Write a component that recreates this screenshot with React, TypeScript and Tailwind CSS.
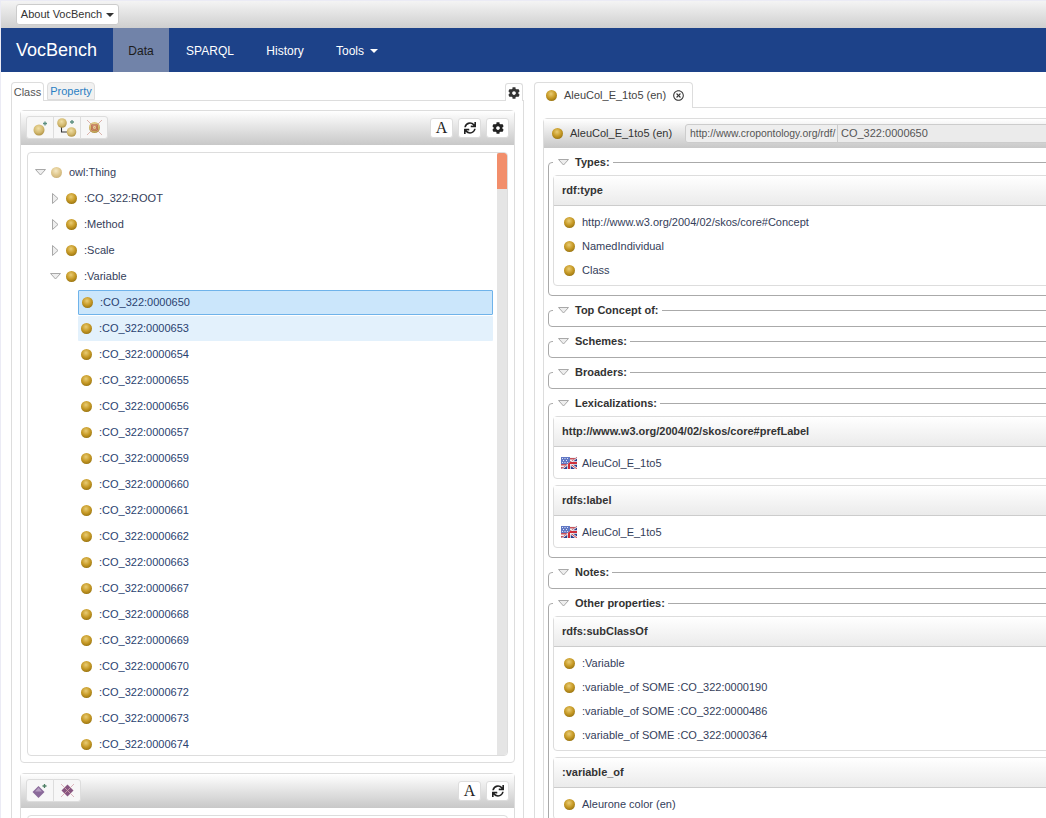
import { ReactNode } from "react";
import { FaCog, FaSync, FaRegTimesCircle } from "react-icons/fa";

// ========================================================================================================
//  Data
// ========================================================================================================
const variables = [
  "0000654", "0000655", "0000656", "0000657", "0000659", "0000660", "0000661", "0000662",
  "0000663", "0000667", "0000668", "0000669", "0000670", "0000672", "0000673", "0000674",
];

// =====================================================
//  Icons
// =====================================================
function Ball({ pale = false, size = 11 }: { pale?: boolean; size?: number }) {
  const id = pale ? "ball-pale" : "ball-full";
  return (
    <svg width={size} height={size} viewBox="0 0 12 12" className="shrink-0">
      <defs>
        <radialGradient id={id} cx="0.45" cy="0.35" r="0.7">
          <stop offset="0" stopColor={pale ? "#f5e8c4" : "#e9cc74"} />
          <stop offset="0.55" stopColor={pale ? "#e0c88e" : "#c79a26"} />
          <stop offset="1" stopColor={pale ? "#c8ae76" : "#94700f"} />
        </radialGradient>
      </defs>
      <circle cx="6" cy="6" r="6" fill={`url(#${id})`} />
    </svg>
  );
}

function Arrow({ open }: { open: boolean }) {
  return (
    <svg width="11" height="11" viewBox="0 0 11 11" className="shrink-0">
      {open ? (
        <path d="M0.5 2.5h10L5.5 8z" fill="#eeeeee" stroke="#a8a8a8" />
      ) : (
        <path d="M2.5 0.5v10L8 5.500z" fill="#eeeeee" stroke="#a8a8a8" />
      )}
    </svg>
  );
}

function Flag({ id }: { id: string }) {
  return (
    <svg width="16" height="12" viewBox="0 0 16 12" className="shrink-0">
      <defs>
        <clipPath id={id}>
          <path d="M16 0v12H0z" />
        </clipPath>
      </defs>
      {/* US half */}
      <rect width="16" height="12" fill="#f2f2f2" />
      <path d="M0 1h16v1.500H0zM0 4h16v1.500H0zM0 7h16v1.500H0zM0 10h16v1.500H0z" fill="#c9525a" />
      <rect width="9" height="7" fill="#6178c4" />
      <path d="M1 1h1v1H1zM3.500 1h1v1h-1zM6 1h1v1H6zM2 3h1v1H2zM5 3h1v1H5zM1 5h1v1H1zM3.500 5h1v1h-1zM6 5h1v1H6z" fill="#dfe4f5" />
      {/* UK half */}
      <g clipPath={`url(#${id})`}>
        <rect width="16" height="12" fill="#2b3f8c" />
        <path d="M0 0l16 12M16 0L0 12" stroke="#f2f2f2" strokeWidth="2.400" />
        <path d="M0 0l16 12M16 0L0 12" stroke="#cf2f3a" strokeWidth="0.900" />
        <path d="M8 0v12M0 6h16" stroke="#f2f2f2" strokeWidth="3.600" />
        <path d="M8 0v12M0 6h16" stroke="#cf2f3a" strokeWidth="2" />
      </g>
    </svg>
  );
}

function AddClassIcon() {
  return (
    <svg width="20" height="20" viewBox="0 0 20 20">
      <defs>
        <radialGradient id="tool-ball" cx="0.45" cy="0.35" r="0.7">
          <stop offset="0" stopColor="#f0dfa6" />
          <stop offset="0.6" stopColor="#d2b86e" />
          <stop offset="1" stopColor="#a88a3c" />
        </radialGradient>
      </defs>
      <circle cx="9" cy="12" r="5.500" fill="url(#tool-ball)" />
      <path d="M15 3.500v4M13 5.500h4" stroke="#5c8f80" strokeWidth="1.300" />
    </svg>
  );
}

function AddSubClassIcon() {
  return (
    <svg width="22" height="20" viewBox="0 0 22 20">
      <path d="M5.500 8v6h6" fill="none" stroke="#333" strokeWidth="1.100" />
      <circle cx="6" cy="5" r="4.800" fill="url(#tool-ball)" />
      <circle cx="15.500" cy="14" r="4.800" fill="url(#tool-ball)" />
      <path d="M16 2v4M14 4h4" stroke="#5c8f80" strokeWidth="1.300" />
    </svg>
  );
}

function RemoveClassIcon() {
  return (
    <svg width="17" height="17" viewBox="0 0 17 17">
      <circle cx="8.500" cy="8.500" r="5.500" fill="url(#tool-ball)" />
      <path d="M6 6h5v5H6z" fill="none" stroke="#b04a3a" strokeWidth="1.200" />
      <path d="M1 1l15 15M16 1L1 16" stroke="#d0938a" strokeWidth="0.700" />
    </svg>
  );
}

function AddDiamondIcon() {
  return (
    <svg width="16" height="16" viewBox="0 0 16 16">
      <path d="M6.500 3L12.500 9L6.500 15L0.500 9z" fill="#8a6a9a" />
      <path d="M6.500 4.500L10 8.500H3z" fill="#b59cc0" />
      <path d="M12.500 1v4M10.500 3h4" stroke="#4f7f66" strokeWidth="1.300" />
    </svg>
  );
}

function RemoveDiamondIcon() {
  return (
    <svg width="15" height="15" viewBox="0 0 15 15">
      <path d="M7.500 1.500L13.500 7.500L7.500 13.500L1.500 7.500z" fill="#875580" />
      <path d="M1 1l13 13M14 1L1 14" stroke="#d3a3ac" strokeWidth="0.800" />
    </svg>
  );
}

// =====================================================
//  Toolbar
// =====================================================
function ToolButton({ children }: { children: ReactNode }) {
  return (
    <span className="flex h-[23px] w-[28px] items-center justify-center border border-[#dddddd] bg-[#f7f7f7] first:rounded-l-[3px] last:rounded-r-[3px] -ml-px first:ml-0">
      {children}
    </span>
  );
}

function RoundButton({ children }: { children: ReactNode }) {
  return (
    <span className="flex h-[20px] w-[23px] items-center justify-center rounded-[3px] border border-[#dddddd] bg-white text-[#222222]">
      {children}
    </span>
  );
}

function FontButton() {
  return (
    <RoundButton>
      <span className="font-['Liberation_Serif',serif] text-[16px] leading-none">A</span>
    </RoundButton>
  );
}

// =====================================================
//  Tree
// =====================================================
function ClassRow({ level, open, name, pale }: { level: 1 | 2; open: boolean; name: string; pale?: boolean }) {
  return (
    <div className={`flex h-[26px] items-center ${level === 1 ? "pl-[7px]" : "pl-[22px]"}`}>
      <Arrow open={open} />
      <span className="ml-[5px]">
        <Ball pale={pale} />
      </span>
      <span className="ml-[7px] text-[#34405a]">{name}</span>
    </div>
  );
}

function LeafRow({ name, state }: { name: string; state?: "selected" | "hover" }) {
  const look =
    state === "selected"
      ? "border border-[#6fb3ea] bg-[#cbe6fb]"
      : state === "hover"
        ? "bg-[#e3f1fc]"
        : "";
  return (
    <div className="flex h-[26px] items-center pl-[50px] pr-[14px]">
      <div className={`flex h-[25px] w-[415px] items-center rounded-[1px] pl-[3px] ${look}`}>
        <Ball />
        <span className="ml-[7px] text-[#2a4270]">{name}</span>
      </div>
    </div>
  );
}

// =====================================================
//  Attribute panels
// =====================================================
function Section({ title, children }: { title: string; children?: ReactNode }) {
  return (
    <fieldset className="mb-[7px] rounded-[4px] border border-[#aaaaaa] pl-[4px] last:mb-0">
      <legend className="flex h-[14px] items-center pr-[3px] pl-[5px] font-bold text-[#333333]">
        <Arrow open />
        <span className="ml-[6px]">{title}:</span>
      </legend>
      {children ? (
        <div className="mt-[6px] mb-[9px] flex flex-col gap-[6px]">{children}</div>
      ) : (
        <div className="h-[9px]" />
      )}
    </fieldset>
  );
}

function Attribute({ title, children }: { title: string; children: ReactNode }) {
  return (
    <div className="rounded-[4px] border border-[#dddddd] bg-white">
      <div className="flex h-[30px] items-center border-b border-[#cccccc] bg-gradient-to-b from-white to-[#ebebeb] pl-[8px] font-bold text-[#333333]">
        {title}
      </div>
      <div className="pt-[4px] pb-[3px] pl-[10px]">{children}</div>
    </div>
  );
}

function Value({ children }: { children: ReactNode }) {
  return (
    <div className="flex h-[24px] items-center gap-[7px] text-[#34405a]">
      <Ball />
      <span>{children}</span>
    </div>
  );
}

function FlagValue({ id, children }: { id: string; children: ReactNode }) {
  return (
    <div className="-ml-[3px] flex h-[24px] items-center gap-[5px] text-[#34405a]">
      <Flag id={id} />
      <span>{children}</span>
    </div>
  );
}

// ========================================================================================================

export default function App() {
  return (
    <div className="h-[818px] w-[1046px] overflow-hidden bg-[#ebebf5] pt-px pl-px font-['Liberation_Sans',Arial,sans-serif] text-[11px] text-[#333333]">
      {/* Top bar */}
      <div className="flex h-[27px] items-start bg-gradient-to-b from-[#f4f4f4] to-[#cfcfcf] pt-[3px] pl-[15px]">
        <button className="flex h-[21px] w-[103px] items-center justify-center gap-[4px] rounded-[3px] border border-[#cccccc] bg-white text-[11px] text-[#333333]">
          About VocBench
          <span className="mt-[1px] h-0 w-0 border-x-[4px] border-t-[4px] border-x-transparent border-t-[#333333]" />
        </button>
      </div>

      {/* Navbar */}
      <nav className="flex h-[44px] items-stretch bg-[#1d4289] text-[12px] text-white">
        <div className="flex w-[112px] items-center pl-[15px] text-[18px]">VocBench</div>
        <div className="flex w-[56px] items-center justify-center bg-[#7183a9] pt-px text-[#1c1c1c]">Data</div>
        <div className="flex w-[81px] items-center justify-center pt-px pl-px">SPARQL</div>
        <div className="flex w-[70px] items-center justify-center pt-px">History</div>
        <div className="ml-[16px] flex items-center gap-[6px] pt-px">
          Tools
          <span className="mt-[1px] h-0 w-0 border-x-[4px] border-t-[4px] border-x-transparent border-t-white" />
        </div>
      </nav>

      <div className="flex h-[746px] bg-white">
        {/* Left column */}
        <div className="w-[523px] shrink-0 pt-[10px] pl-[10px]">
          <div className="relative z-10 -mb-px flex h-[19px] items-end justify-between pr-[1px]">
            <div className="flex gap-[3px]">
              <span className="flex h-[19px] w-[33px] items-center justify-center rounded-t-[4px] border border-b-0 border-[#dddddd] bg-white text-[#555555]">
                Class
              </span>
              <span className="flex h-[18px] w-[48px] items-center justify-center rounded-t-[4px] border border-[#dddddd] bg-[#f1f1f1] text-[#2a80c4]">
                Property
              </span>
            </div>
            <span className="flex h-[18px] w-[18px] items-center justify-center rounded-t-[3px] border border-b-0 border-[#dddddd] bg-white text-[#333333]">
              <FaCog size={12} />
            </span>
          </div>
          <div className="h-[800px] border border-[#dddddd] px-[8px] pt-[9px]">
            {/* Class tree */}
            <div className="w-[495px] rounded-[4px] border border-[#dddddd]">
              <div className="flex h-[34px] items-start justify-between bg-gradient-to-b from-white to-[#c8c8c8] pt-[6px] pr-[5px] pl-[5px]">
                <div className="-mt-[1px] flex">
                  <ToolButton><AddClassIcon /></ToolButton>
                  <ToolButton><AddSubClassIcon /></ToolButton>
                  <ToolButton><RemoveClassIcon /></ToolButton>
                </div>
                <div className="mt-px flex gap-[5px]">
                  <FontButton />
                  <RoundButton><FaSync size={12} /></RoundButton>
                  <RoundButton><FaCog size={12} /></RoundButton>
                </div>
              </div>
              <div className="px-[6px] pt-[7px] pb-[6px]">
                <div className="relative h-[604px] overflow-hidden rounded-[4px] border border-[#dddddd] pt-[6px]">
                  <ClassRow level={1} open name="owl:Thing" pale />
                  <ClassRow level={2} open={false} name=":CO_322:ROOT" />
                  <ClassRow level={2} open={false} name=":Method" />
                  <ClassRow level={2} open={false} name=":Scale" />
                  <ClassRow level={2} open name=":Variable" />
                  <LeafRow name=":CO_322:0000650" state="selected" />
                  <LeafRow name=":CO_322:0000653" state="hover" />
                  {variables.map((v) => (
                    <LeafRow key={v} name={`:CO_322:${v}`} />
                  ))}
                  {/* Scrollbar */}
                  <div className="absolute top-0 right-0 bottom-0 w-[10px] bg-[#e5e5e5]">
                    <div className="h-[36px] w-full rounded-t-[2px] bg-[#f28e6b]" />
                  </div>
                </div>
              </div>
            </div>

            {/* Property tree */}
            <div className="mt-[10px] w-[495px] rounded-[4px] border border-[#dddddd]">
              <div className="flex h-[34px] items-start justify-between bg-gradient-to-b from-white to-[#c8c8c8] pt-[6px] pr-[5px] pl-[5px]">
                <div className="-mt-[1px] flex">
                  <ToolButton><AddDiamondIcon /></ToolButton>
                  <ToolButton><RemoveDiamondIcon /></ToolButton>
                </div>
                <div className="mt-px flex gap-[5px]">
                  <FontButton />
                  <RoundButton><FaSync size={12} /></RoundButton>
                </div>
              </div>
              <div className="px-[6px] pt-[7px]">
                <div className="h-[40px] rounded-[4px] border border-[#dddddd]" />
              </div>
            </div>
          </div>
        </div>

        {/* Right column */}
        <div className="ml-[10px] w-[560px] shrink-0 pt-[10px]">
          <div className="relative z-10 -mb-px flex h-[26px] w-[159px] items-center rounded-t-[4px] border border-b-0 border-[#dddddd] bg-white pl-[11px] text-[#444444]">
            <Ball />
            <span className="ml-[7px]">AleuCol_E_1to5 (en)</span>
            <span className="ml-[7px] text-[#333333]"><FaRegTimesCircle size={11} /></span>
          </div>
          <div className="h-[800px] border border-[#dddddd] pt-[10px] pl-[8px]">
            <div className="h-[760px] rounded-[4px] border border-[#dddddd]">
              {/* Resource header */}
              <div className="flex h-[29px] items-start bg-gradient-to-b from-white to-[#c8c8c8] pt-[5px] pl-[8px] text-[#333333]">
                <span className="flex h-[19px] items-center">
                  <Ball />
                </span>
                <span className="ml-[7px] flex h-[19px] w-[115px] shrink-0 items-center">AleuCol_E_1to5 (en)</span>
                <span className="flex h-[19px] w-[153px] shrink-0 items-center rounded-l-[3px] border border-[#cccccc] bg-[#eeeeee] pl-[4px] text-[10.4px] whitespace-nowrap text-[#555555]">
                  http://www.cropontology.org/rdf/
                </span>
                <span className="-ml-px flex h-[19px] w-[300px] shrink-0 items-center border border-[#cccccc] bg-[#ebebeb] pl-[3px] text-[#555555]">
                  CO_322:0000650
                </span>
              </div>

              <div className="pt-[7px] pl-[4px]">
                <Section title="Types">
                  <Attribute title="rdf:type">
                    <Value>http://www.w3.org/2004/02/skos/core#Concept</Value>
                    <Value>NamedIndividual</Value>
                    <Value>Class</Value>
                  </Attribute>
                </Section>
                <Section title="Top Concept of" />
                <Section title="Schemes" />
                <Section title="Broaders" />
                <Section title="Lexicalizations">
                  <Attribute title="http://www.w3.org/2004/02/skos/core#prefLabel">
                    <FlagValue id="flag-pref">AleuCol_E_1to5</FlagValue>
                  </Attribute>
                  <Attribute title="rdfs:label">
                    <FlagValue id="flag-label">AleuCol_E_1to5</FlagValue>
                  </Attribute>
                </Section>
                <Section title="Notes" />
                <Section title="Other properties">
                  <Attribute title="rdfs:subClassOf">
                    <Value>:Variable</Value>
                    <Value>:variable_of SOME :CO_322:0000190</Value>
                    <Value>:variable_of SOME :CO_322:0000486</Value>
                    <Value>:variable_of SOME :CO_322:0000364</Value>
                  </Attribute>
                  <Attribute title=":variable_of">
                    <Value>Aleurone color (en)</Value>
                  </Attribute>
                </Section>
              </div>
            </div>
          </div>
        </div>
      </div>
    </div>
  );
}
